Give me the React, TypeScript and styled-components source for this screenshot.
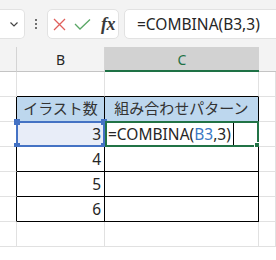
import styled, { createGlobalStyle } from 'styled-components';

const GlobalStyle = createGlobalStyle`
  html, body {
    margin: 0;
    padding: 0;
    background: #ffffff;
    overflow: hidden;
  }
`;

const GRID = '#e1e1e1';
const EDGE = '#000000';
const FONT = `"Noto Sans", "Noto Sans CJK JP", sans-serif`;

const Page = styled.div`
  width: 276px;
  height: 260px;
  overflow: hidden;
  font-family: ${FONT};
  color: #262626;
`;

const Toolbar = styled.div`
  height: 47px;
  box-sizing: border-box;
  padding-top: 9px;
  background: #f3f3f3;
  display: flex;
  align-items: flex-start;
`;

const NameBox = styled.div`
  width: 25px;
  height: 30px;
  box-sizing: border-box;
  background: #fff;
  border: 1px solid #e2e2e2;
  border-left: none;
  border-radius: 0 5px 5px 0;
  display: flex;
  align-items: center;
  justify-content: flex-end;
  padding-right: 6px;
`;

const Grip = styled.div`
  width: 22px;
  height: 30px;
  display: flex;
  flex-direction: column;
  align-items: center;
  justify-content: center;
  gap: 2px;

  span {
    width: 2px;
    height: 2px;
    background: #444;
    border-radius: 1px;
  }
`;

const FxBox = styled.div`
  width: 72px;
  height: 30px;
  box-sizing: border-box;
  background: #fff;
  border: 1px solid #e2e2e2;
  border-radius: 5px;
  display: flex;
  align-items: center;
  padding-left: 5px;
  gap: 8px;
`;

const FxLabel = styled.span`
  font-family: "Liberation Serif", serif;
  font-style: italic;
  font-weight: bold;
  font-size: 18px;
  color: #3a3a3a;
  margin-left: 2px;
  letter-spacing: -0.5px;
`;

const FormulaBox = styled.div`
  flex: 1;
  margin-left: 5px;
  margin-right: -10px;
  height: 30px;
  box-sizing: border-box;
  background: #fff;
  border: 1px solid #e2e2e2;
  border-radius: 5px;
  display: flex;
  align-items: center;
  padding-left: 12px;
  font-size: 15.5px;
  color: #262626;
  white-space: nowrap;
`;

const Sheet = styled.div`
  display: grid;
  grid-template-columns: 17px 88px 154px 1fr;
  grid-auto-rows: 25px;
`;

const ColHead = styled.div<{ $active?: boolean; $line?: boolean }>`
  box-sizing: border-box;
  background: ${(p) => (p.$active ? '#d2d2d2' : '#f3f3f3')};
  border-bottom: ${(p) => (p.$active ? '2px solid #1e7145' : '1px solid #c4c4c4')};
  border-right: ${(p) => (p.$line ? '1px solid #d4d4d4' : 'none')};
  color: ${(p) => (p.$active ? '#1e7145' : '#262626')};
  font-size: 14px;
  display: flex;
  align-items: center;
  justify-content: center;
  padding-top: 1px;
`;

const Cell = styled.div<{
  $right?: string;
  $bottom?: string;
  $bg?: string;
  $align?: 'left' | 'right' | 'center';
}>`
  position: relative;
  box-sizing: border-box;
  border-right: 1px solid ${(p) => p.$right ?? GRID};
  border-bottom: 1px solid ${(p) => p.$bottom ?? GRID};
  background: ${(p) => p.$bg ?? '#fff'};
  display: flex;
  align-items: center;
  justify-content: ${(p) =>
    p.$align === 'right' ? 'flex-end' : p.$align === 'center' ? 'center' : 'flex-start'};
  padding: 0 3px;
  font-size: 15.5px;
  line-height: 24px;
  white-space: nowrap;
`;

const Label = styled.span`
  font-family: "Noto Sans CJK JP", sans-serif;
  font-size: 15px;
  color: #333;
  margin-top: -3px;
`;

const RefBox = styled.div`
  position: absolute;
  left: -1px;
  top: -1px;
  right: -1px;
  bottom: -1px;
  border: 2px solid #4472c4;
  pointer-events: none;
`;

const Handle = styled.i<{ $x: 'l' | 'r'; $y: 't' | 'b' }>`
  position: absolute;
  width: 6px;
  height: 6px;
  background: #4472c4;
  ${(p) => (p.$x === 'l' ? 'left: -4px;' : 'right: -4px;')}
  ${(p) => (p.$y === 't' ? 'top: -4px;' : 'bottom: -4px;')}
`;

const EditBox = styled.div`
  position: absolute;
  left: 0;
  top: -1px;
  right: -1px;
  bottom: -1px;
  border: 2px solid #217346;
  pointer-events: none;

  &::after {
    content: '';
    position: absolute;
    right: -4px;
    bottom: -4px;
    width: 5px;
    height: 5px;
    background: #217346;
    border: 1px solid #fff;
  }
`;

const Ref = styled.span`
  color: #3c78c3;
`;

const Caret = styled.span`
  display: inline-block;
  width: 1px;
  height: 24px;
  background: #000;
  margin-left: 2px;
`;

const Chevron = () => (
  <svg width="8" height="5" viewBox="0 0 8 5">
    <path d="M0.5 0.5 L4 4 L7.5 0.5" fill="none" stroke="#444" strokeWidth="1.2" />
  </svg>
);

const Cancel = () => (
  <svg width="13" height="13" viewBox="0 0 13 13">
    <path d="M1 1 L12 12 M12 1 L1 12" stroke="#e0605c" strokeWidth="1.3" fill="none" />
  </svg>
);

const Enter = () => (
  <svg width="17" height="11" viewBox="0 0 17 11">
    <path d="M1 5 L6 10 L16 0.5" stroke="#5aa766" strokeWidth="1.3" fill="none" />
  </svg>
);

const Formula = () => (
  <>
    =COMBINA(<Ref>B3</Ref>,3)
  </>
);

const rows = [
  { b: 'イラスト数', c: '組み合わせパターン', head: true },
  { b: '3', c: '', edit: true },
  { b: '4', c: '' },
  { b: '5', c: '' },
  { b: '6', c: '' },
];

export default function App() {
  return (
    <Page>
      <GlobalStyle />
      <Toolbar>
        <NameBox>
          <Chevron />
        </NameBox>
        <Grip>
          <span />
          <span />
          <span />
        </Grip>
        <FxBox>
          <Cancel />
          <Enter />
          <FxLabel>fx</FxLabel>
        </FxBox>
        <FormulaBox>=COMBINA(B3,3)</FormulaBox>
      </Toolbar>

      <Sheet>
        <ColHead $line />
        <ColHead $line>B</ColHead>
        <ColHead $active>C</ColHead>
        <ColHead />

        <Cell />
        <Cell $bottom={EDGE} />
        <Cell $bottom={EDGE} />
        <Cell />

        {rows.map((r, i) => [
          <Cell key={`a${i}`} $right={EDGE} />,
          <Cell
            key={`b${i}`}
            $right={EDGE}
            $bottom={EDGE}
            $bg={r.head ? '#bdd7ee' : r.edit ? '#e8edf8' : '#fff'}
            $align={r.head ? 'center' : 'right'}
          >
            {r.head ? <Label>{r.b}</Label> : r.b}
            {r.edit && (
              <RefBox>
                <Handle $x="l" $y="t" />
                <Handle $x="r" $y="t" />
                <Handle $x="l" $y="b" />
                <Handle $x="r" $y="b" />
              </RefBox>
            )}
          </Cell>,
          <Cell
            key={`c${i}`}
            $right={EDGE}
            $bottom={EDGE}
            $bg={r.head ? '#bdd7ee' : '#fff'}
            $align={r.head ? 'center' : 'left'}
          >
            {r.head ? <Label>{r.c}</Label> : null}
            {r.edit && (
              <>
                <Formula />
                <Caret />
                <EditBox />
              </>
            )}
          </Cell>,
          <Cell key={`d${i}`} />,
        ])}

        <Cell />
        <Cell />
        <Cell />
        <Cell />
      </Sheet>
    </Page>
  );
}
